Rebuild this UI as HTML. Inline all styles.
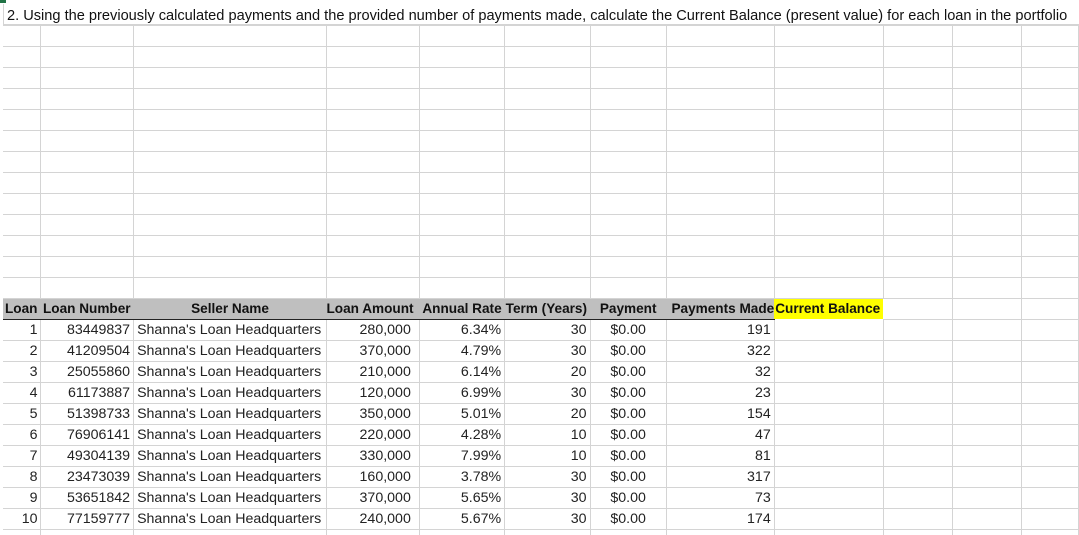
<!DOCTYPE html>
<html><head><meta charset="utf-8"><style>
html,body{margin:0;padding:0;background:#fff;width:1079px;height:535px;overflow:hidden;position:relative}
body{font-family:"Liberation Sans",Arial,sans-serif;font-size:14.2px;color:#222}
table{position:absolute;left:3px;top:4px;border-collapse:collapse;table-layout:fixed}
td{height:21px;padding:0 3px;border-right:1px solid #d4d4d4;border-bottom:1px solid #d4d4d4;white-space:nowrap;overflow:hidden;line-height:20px;box-sizing:border-box}
tr.h td{background:#bfbfbf;font-weight:bold;border-right:none;border-bottom:1px solid #222;color:#111;font-size:13.6px}
tr.h td.y{background:#ffff00;border-bottom:none;padding-left:1px}
tr.h td.n{background:none;border-right:1px solid #d4d4d4;border-bottom:1px solid #d4d4d4}
.r{text-align:right}.c{text-align:center}
#g{position:absolute;left:0;top:0;width:6px;height:3px;background:#217346}
</style></head><body>
<table>
<colgroup><col style="width:38px"><col style="width:92px"><col style="width:193px"><col style="width:93px"><col style="width:84px"><col style="width:85px"><col style="width:77px"><col style="width:108px"><col style="width:109px"><col style="width:72px"><col style="width:72px"><col style="width:60px"></colgroup>
<tr><td></td><td></td><td></td><td></td><td></td><td></td><td></td><td></td><td></td><td></td><td></td><td></td></tr>
<tr><td></td><td></td><td></td><td></td><td></td><td></td><td></td><td></td><td></td><td></td><td></td><td></td></tr>
<tr><td></td><td></td><td></td><td></td><td></td><td></td><td></td><td></td><td></td><td></td><td></td><td></td></tr>
<tr><td></td><td></td><td></td><td></td><td></td><td></td><td></td><td></td><td></td><td></td><td></td><td></td></tr>
<tr><td></td><td></td><td></td><td></td><td></td><td></td><td></td><td></td><td></td><td></td><td></td><td></td></tr>
<tr><td></td><td></td><td></td><td></td><td></td><td></td><td></td><td></td><td></td><td></td><td></td><td></td></tr>
<tr><td></td><td></td><td></td><td></td><td></td><td></td><td></td><td></td><td></td><td></td><td></td><td></td></tr>
<tr><td></td><td></td><td></td><td></td><td></td><td></td><td></td><td></td><td></td><td></td><td></td><td></td></tr>
<tr><td></td><td></td><td></td><td></td><td></td><td></td><td></td><td></td><td></td><td></td><td></td><td></td></tr>
<tr><td></td><td></td><td></td><td></td><td></td><td></td><td></td><td></td><td></td><td></td><td></td><td></td></tr>
<tr><td></td><td></td><td></td><td></td><td></td><td></td><td></td><td></td><td></td><td></td><td></td><td></td></tr>
<tr><td></td><td></td><td></td><td></td><td></td><td></td><td></td><td></td><td></td><td></td><td></td><td></td></tr>
<tr><td></td><td></td><td></td><td></td><td></td><td></td><td></td><td></td><td></td><td></td><td></td><td></td></tr>
<tr><td></td><td></td><td></td><td></td><td></td><td></td><td></td><td></td><td></td><td></td><td></td><td></td></tr>
<tr class="h"><td style="padding-left:2px">Loan</td><td style="padding-left:2px">Loan Number</td><td class="c">Seller Name</td><td style="padding-left:0;overflow:visible">Loan Amount</td><td style="padding-left:3px;overflow:visible">Annual Rate</td><td style="padding-left:1px">Term (Years)</td><td class="c">Payment</td><td class="r" style="padding-right:0">Payments Made</td><td class="y">Current Balance</td><td class="n"></td><td class="n"></td><td class="n"></td></tr>
<tr><td class="r">1</td><td class="r">83449837</td><td>Shanna's Loan Headquarters</td><td class="r" style="padding-right:8px">280,000</td><td class="r">6.34%</td><td class="r">30</td><td class="c">$0.00</td><td class="r">191</td><td></td><td></td><td></td><td></td></tr>
<tr><td class="r">2</td><td class="r">41209504</td><td>Shanna's Loan Headquarters</td><td class="r" style="padding-right:8px">370,000</td><td class="r">4.79%</td><td class="r">30</td><td class="c">$0.00</td><td class="r">322</td><td></td><td></td><td></td><td></td></tr>
<tr><td class="r">3</td><td class="r">25055860</td><td>Shanna's Loan Headquarters</td><td class="r" style="padding-right:8px">210,000</td><td class="r">6.14%</td><td class="r">20</td><td class="c">$0.00</td><td class="r">32</td><td></td><td></td><td></td><td></td></tr>
<tr><td class="r">4</td><td class="r">61173887</td><td>Shanna's Loan Headquarters</td><td class="r" style="padding-right:8px">120,000</td><td class="r">6.99%</td><td class="r">30</td><td class="c">$0.00</td><td class="r">23</td><td></td><td></td><td></td><td></td></tr>
<tr><td class="r">5</td><td class="r">51398733</td><td>Shanna's Loan Headquarters</td><td class="r" style="padding-right:8px">350,000</td><td class="r">5.01%</td><td class="r">20</td><td class="c">$0.00</td><td class="r">154</td><td></td><td></td><td></td><td></td></tr>
<tr><td class="r">6</td><td class="r">76906141</td><td>Shanna's Loan Headquarters</td><td class="r" style="padding-right:8px">220,000</td><td class="r">4.28%</td><td class="r">10</td><td class="c">$0.00</td><td class="r">47</td><td></td><td></td><td></td><td></td></tr>
<tr><td class="r">7</td><td class="r">49304139</td><td>Shanna's Loan Headquarters</td><td class="r" style="padding-right:8px">330,000</td><td class="r">7.99%</td><td class="r">10</td><td class="c">$0.00</td><td class="r">81</td><td></td><td></td><td></td><td></td></tr>
<tr><td class="r">8</td><td class="r">23473039</td><td>Shanna's Loan Headquarters</td><td class="r" style="padding-right:8px">160,000</td><td class="r">3.78%</td><td class="r">30</td><td class="c">$0.00</td><td class="r">317</td><td></td><td></td><td></td><td></td></tr>
<tr><td class="r">9</td><td class="r">53651842</td><td>Shanna's Loan Headquarters</td><td class="r" style="padding-right:8px">370,000</td><td class="r">5.65%</td><td class="r">30</td><td class="c">$0.00</td><td class="r">73</td><td></td><td></td><td></td><td></td></tr>
<tr><td class="r">10</td><td class="r">77159777</td><td>Shanna's Loan Headquarters</td><td class="r" style="padding-right:8px">240,000</td><td class="r">5.67%</td><td class="r">30</td><td class="c">$0.00</td><td class="r">174</td><td></td><td></td><td></td><td></td></tr>
<tr><td></td><td></td><td></td><td></td><td></td><td></td><td></td><td></td><td></td><td></td><td></td><td></td></tr>
</table>
<div style="position:absolute;left:3px;top:4px;width:1076px;height:20px;background:#fff"></div>
<div style="position:absolute;left:7px;top:6px;line-height:20px;font-size:14.6px;color:#111;white-space:nowrap">2. Using the previously calculated payments and the provided number of payments made, calculate the Current Balance (present value) for each loan in the portfolio</div>
<div style="position:absolute;left:3px;top:24px;width:1076px;height:1px;background:#d4d4d4"></div>
<div style="position:absolute;left:3px;top:4px;width:1px;height:21px;background:#d4d4d4"></div>
<div id="g"></div>
</body></html>
